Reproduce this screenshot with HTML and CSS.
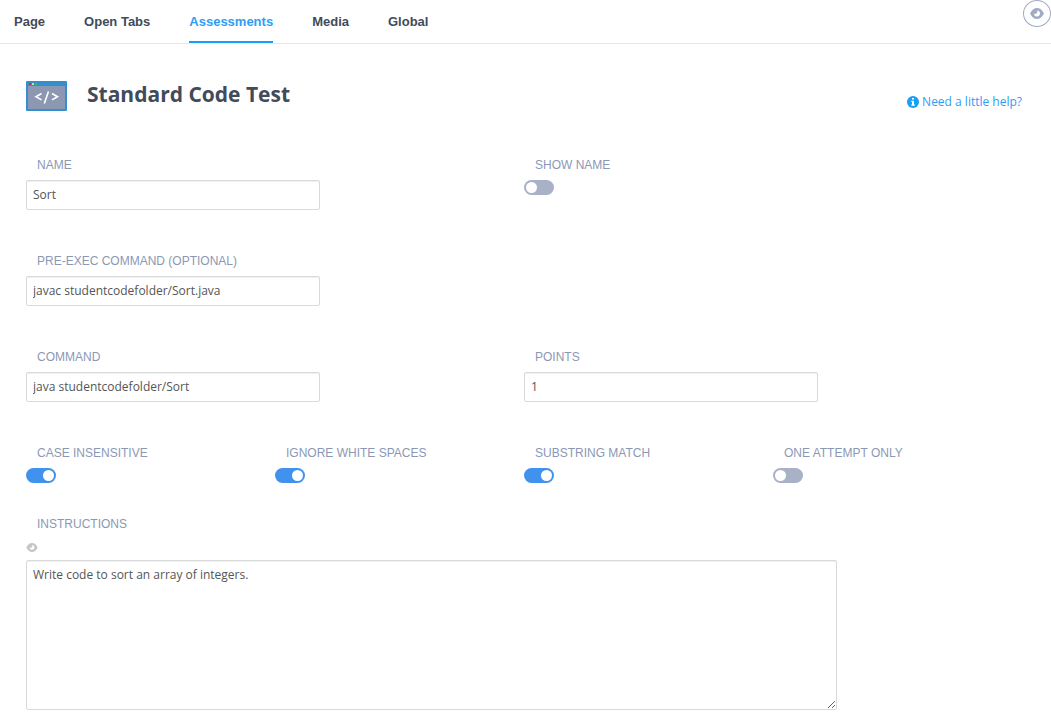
FILE: index.html
```html
<!DOCTYPE html>
<html lang="en">
<head>
<meta charset="utf-8">
<title>Standard Code Test</title>
<link rel="stylesheet" href="styles.css">
</head>
<body>
<svg class="sprite" aria-hidden="true">
  <symbol id="eye" viewBox="0 0 14 11">
    <path d="M0 5.500C2 1.500 4.300 0 7 0s5 1.500 7 5.500c-2 4-4.300 5.500-7 5.500S2 9.500 0 5.500z"/>
    <path fill="#fff" d="M7.300 2.400A3 3 0 1 1 4 5.400c.8.600 1.800.600 2.500 0 .8-.8 1.100-1.900.8-3z"/>
  </symbol>
</svg>
<header class="topbar">
  <nav class="tabs">
    <a class="tab" href="#page">Page</a>
    <a class="tab" href="#tabs">Open Tabs</a>
    <a class="tab active" href="#assessments">Assessments</a>
    <a class="tab" href="#media">Media</a>
    <a class="tab" href="#global">Global</a>
  </nav>
  <button class="preview" type="button" aria-label="Preview"><svg class="eye-large"><use href="#eye"/></svg></button>
</header>
<main class="content">
  <div class="heading">
    <svg class="logo" viewBox="0 0 41 30" aria-hidden="true">
      <rect width="41" height="30" rx="1" fill="#338fce"/>
      <rect x="2" y="5" width="37" height="23" fill="#8c97b2"/>
      <rect x="3" y="2" width="2" height="2" fill="#c9303f"/>
      <rect x="6" y="2" width="2" height="2" fill="#d9dc86"/>
      <rect x="9" y="2" width="2" height="2" fill="#25c45a"/>
      <path d="M15.500 12.500L10 15.700l5.500 3.200M26 12.500l5.500 3.200-5.500 3.200M22.500 10.500l-4.200 12" fill="none" stroke="#fff" stroke-width="1.600"/>
    </svg>
    <h1 class="title">Standard Code Test</h1>
    <a class="help" href="#help">
      <svg class="info" viewBox="0 0 12 12" aria-hidden="true">
        <circle cx="6" cy="6" r="6" fill="#189ff8"/>
        <path d="M5 2h2v1.600H5zM4.300 4.700H7v3.700h.8v1.300H4.300V8.400H5V6h-.7z" fill="#fff"/>
      </svg>
      <span>Need a little help?</span>
    </a>
  </div>
  <form class="form">
    <div class="row">
      <div class="field half">
        <label class="label" for="name">NAME</label>
        <input class="input" id="name" type="text" value="Sort">
      </div>
      <div class="field half">
        <label class="label" for="show">SHOW NAME</label>
        <input class="switch" id="show" type="checkbox">
      </div>
    </div>
    <div class="row">
      <div class="field half">
        <label class="label" for="pre">PRE-EXEC COMMAND (OPTIONAL)</label>
        <input class="input" id="pre" type="text" value="javac studentcodefolder/Sort.java" spellcheck="false">
      </div>
    </div>
    <div class="row">
      <div class="field half">
        <label class="label" for="command">COMMAND</label>
        <input class="input" id="command" type="text" value="java studentcodefolder/Sort" spellcheck="false">
      </div>
      <div class="field half">
        <label class="label" for="points">POINTS</label>
        <input class="input" id="points" type="text" value="1">
      </div>
    </div>
    <div class="row options">
      <div class="field">
        <label class="label" for="case">CASE INSENSITIVE</label>
        <input class="switch" id="case" type="checkbox" checked>
      </div>
      <div class="field">
        <label class="label" for="white">IGNORE WHITE SPACES</label>
        <input class="switch" id="white" type="checkbox" checked>
      </div>
      <div class="field">
        <label class="label" for="sub">SUBSTRING MATCH</label>
        <input class="switch" id="sub" type="checkbox" checked>
      </div>
      <div class="field">
        <label class="label" for="once">ONE ATTEMPT ONLY</label>
        <input class="switch" id="once" type="checkbox">
      </div>
    </div>
    <div class="field">
      <label class="label" for="instructions">INSTRUCTIONS</label>
      <button class="toggle-view" type="button" aria-label="Preview instructions"><svg class="eye-small"><use href="#eye"/></svg></button>
      <textarea class="input area" id="instructions">Write code to sort an array of integers.</textarea>
    </div>
  </form>
</main>
</body>
</html>
```

FILE: styles.css
```css
* {
  box-sizing: border-box;
}

body {
  margin: 0;
  background: #fff;
  color: #414b59;
  font: 12px "Open Sans", "Noto Sans", sans-serif;
}

.sprite {
  display: none;
}

.topbar {
  display: flex;
  justify-content: space-between;
  align-items: flex-start;
  border-bottom: 1px solid #e9e9eb;
}

.tabs {
  display: flex;
  gap: 39px;
  padding-left: 14px;
}

.tab {
  height: 43px;
  border-bottom: 2px solid transparent;
  color: #414b59;
  font: bold 13px/44px "Liberation Sans", Arial, sans-serif;
  text-decoration: none;
}

.tab.active {
  border-color: #189ff8;
  color: #2e9df7;
}

.preview {
  display: flex;
  align-items: center;
  justify-content: center;
  width: 28px;
  height: 27px;
  padding: 0;
  border: 1px solid #a0abc4;
  border-radius: 50%;
  background: #fff;
}

.eye-large {
  width: 14px;
  height: 11px;
  fill: #a0abc4;
}

.content {
  padding: 37px 29px 10px 26px;
}

.heading {
  display: flex;
  align-items: flex-start;
  margin-bottom: 46px;
}

.logo {
  width: 41px;
  height: 30px;
}

.title {
  flex: 1;
  margin: 0 0 0 20px;
  font-size: 21px;
  font-weight: 700;
  line-height: 26px;
}

.help {
  display: flex;
  align-items: center;
  gap: 3px;
  margin-top: 12px;
  color: #2e9df7;
  line-height: 18px;
  text-decoration: none;
}

.info {
  width: 12px;
  height: 12px;
}

.row {
  display: grid;
  grid-template-columns: repeat(4, 1fr);
  margin-bottom: 43px;
}

.options {
  margin-bottom: 33px;
}

.field {
  display: flex;
  flex-direction: column;
  align-items: flex-start;
}

.half {
  grid-column: span 2;
}

.label {
  margin: 0 0 7px 11px;
  color: #8b98b5;
  font: 12px/16px "Liberation Sans", Arial, sans-serif;
}

.input {
  width: 59%;
  height: 30px;
  padding: 0 6px 2px;
  border: 1px solid #d9d9d9;
  border-radius: 2px;
  outline: 0;
  background: #fff;
  box-shadow: inset 0 1px 1px #f0f0f0;
  color: #555;
  font: 12px/18px "Open Sans", "Noto Sans", sans-serif;
}

.switch {
  appearance: none;
  display: flex;
  align-items: center;
  width: 30px;
  height: 15px;
  margin: 0;
  padding: 0 2px;
  border-radius: 8px;
  background: #a8b1c6;
}

.switch::before {
  content: "";
  width: 11px;
  height: 11px;
  border-radius: 50%;
  background: #fff;
}

.switch:checked {
  justify-content: flex-end;
  background: #4192ef;
}

.toggle-view {
  display: flex;
  margin: 4px 0 8px;
  padding: 0;
  border: 0;
  background: none;
}

.eye-small {
  width: 12px;
  height: 9px;
  fill: #c4c6ca;
}

.area {
  width: 811px;
  max-width: 100%;
  height: 150px;
  padding: 5px 6px;
  resize: both;
}
```
